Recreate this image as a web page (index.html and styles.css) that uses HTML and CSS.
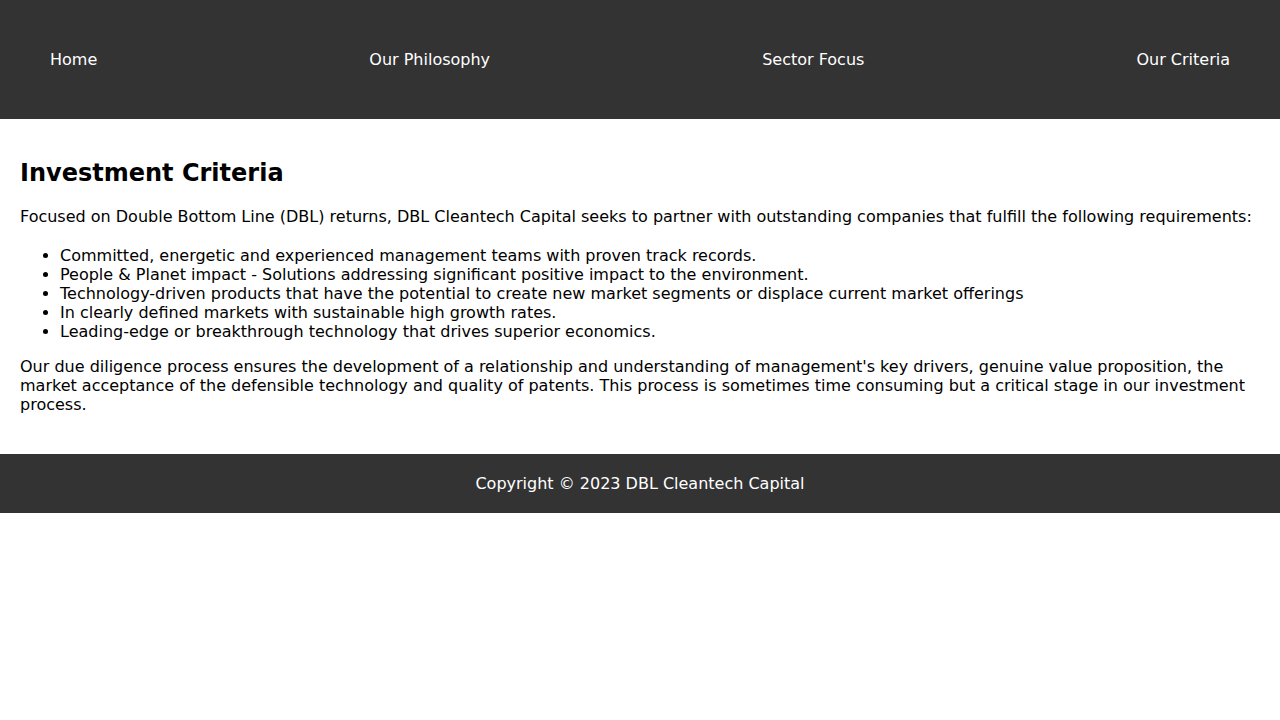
FILE: index.html
```html
<!DOCTYPE html>
<html lang="en">
<head>
<meta charset="utf-8">
<title>Investment Criteria - DBL Cleantech Capital</title>
<link rel="stylesheet" href="styles.css">
</head>
<body>
<header class="site-header">
  <nav class="nav">
    <a class="nav-link" href="#">Home</a>
    <a class="nav-link" href="#">Our Philosophy</a>
    <a class="nav-link" href="#">Sector Focus</a>
    <a class="nav-link" href="#">Our Criteria</a>
  </nav>
</header>
<main class="content">
  <h1 class="title">Investment Criteria</h1>
  <p class="text">Focused on Double Bottom Line (DBL) returns, DBL Cleantech Capital seeks to partner with outstanding companies that fulfill the following requirements:</p>
  <ul class="list">
    <li>Committed, energetic and experienced management teams with proven track records.</li>
    <li>People &amp; Planet impact - Solutions addressing significant positive impact to the environment.</li>
    <li>Technology-driven products that have the potential to create new market segments or displace current market offerings</li>
    <li>In clearly defined markets with sustainable high growth rates.</li>
    <li>Leading-edge or breakthrough technology that drives superior economics.</li>
  </ul>
  <p class="text">Our due diligence process ensures the development of a relationship and understanding of management's key drivers, genuine value proposition, the market acceptance of the defensible technology and quality of patents. This process is sometimes time consuming but a critical stage in our investment process.</p>
</main>
<footer class="site-footer">
  <p class="copyright">Copyright © 2023 DBL Cleantech Capital</p>
</footer>
</body>
</html>
```

FILE: styles.css
```css
html, body {
  margin: 0;
  padding: 0;
  background: #fff;
  font-family: "DejaVu Sans", sans-serif;
  font-size: 16px;
  color: #000;
}

.site-header {
  background: #333;
  padding: 50px 50px;
}

.nav {
  display: flex;
  justify-content: space-between;
}

.nav-link {
  color: #fff;
  text-decoration: none;
  line-height: 19px;
}

.content {
  padding: 20px 20px 24px;
}

.title {
  font-size: 24px;
  margin: 20px 0;
}

.text {
  margin: 16px 0;
}

.list {
  margin: 20px 0 16px;
  padding-left: 40px;
}

.site-footer {
  background: #333;
  color: #fff;
  text-align: center;
  padding: 20px;
}

.copyright {
  margin: 0;
  line-height: 19px;
}
```
